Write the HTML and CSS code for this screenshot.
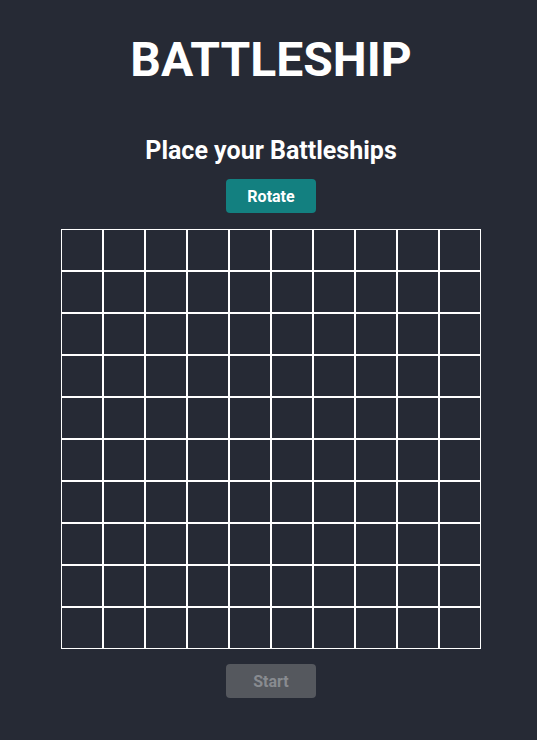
FILE: index.html
```html
<!DOCTYPE html>
<html>
<head>
<meta charset="utf-8">
<link rel="stylesheet" href="styles.css">
</head>
<body>
<main class="app">
  <h1 class="title">BATTLESHIP</h1>
  <h2 class="subtitle">Place your Battleships</h2>
  <button class="btn btn-rotate">Rotate</button>
  <div class="board" id="board"></div>
  <button class="btn btn-start" disabled>Start</button>
</main>
<script>
  var b = document.getElementById('board');
  for (var i = 0; i < 100; i++) {
    var c = document.createElement('div');
    c.className = 'cell';
    b.appendChild(c);
  }
</script>
</body>
</html>
```
FILE: styles.css
```css
html, body {
  margin: 0;
  padding: 0;
  background: #262a35;
  height: 100%;
}
body {
  font-family: Roboto, "Liberation Sans", sans-serif;
  color: #ffffff;
}
.app {
  display: flex;
  flex-direction: column;
  align-items: center;
  padding-top: 32px;
  padding-left: 5px;
}
.title {
  margin: 0;
  font-size: 48px;
  line-height: 56px;
  font-weight: 700;
}
.subtitle {
  margin: 48px 0 0;
  font-size: 25px;
  line-height: 29px;
  font-weight: 700;
}
.btn {
  width: 90px;
  height: 34px;
  border: none;
  border-radius: 4px;
  font-family: Roboto, "Liberation Sans", sans-serif;
  font-size: 16px;
  font-weight: 700;
  padding: 0;
}
.btn-rotate {
  margin-top: 14px;
  background: #138080;
  color: #ffffff;
}
.btn-start {
  margin-top: 15px;
  background: #55585e;
  color: #888b90;
}
.board {
  margin-top: 16px;
  display: grid;
  grid-template-columns: repeat(10, 42px);
  grid-template-rows: repeat(10, 42px);
}
.cell {
  box-sizing: border-box;
  border: 1px solid #ffffff;
}
```
